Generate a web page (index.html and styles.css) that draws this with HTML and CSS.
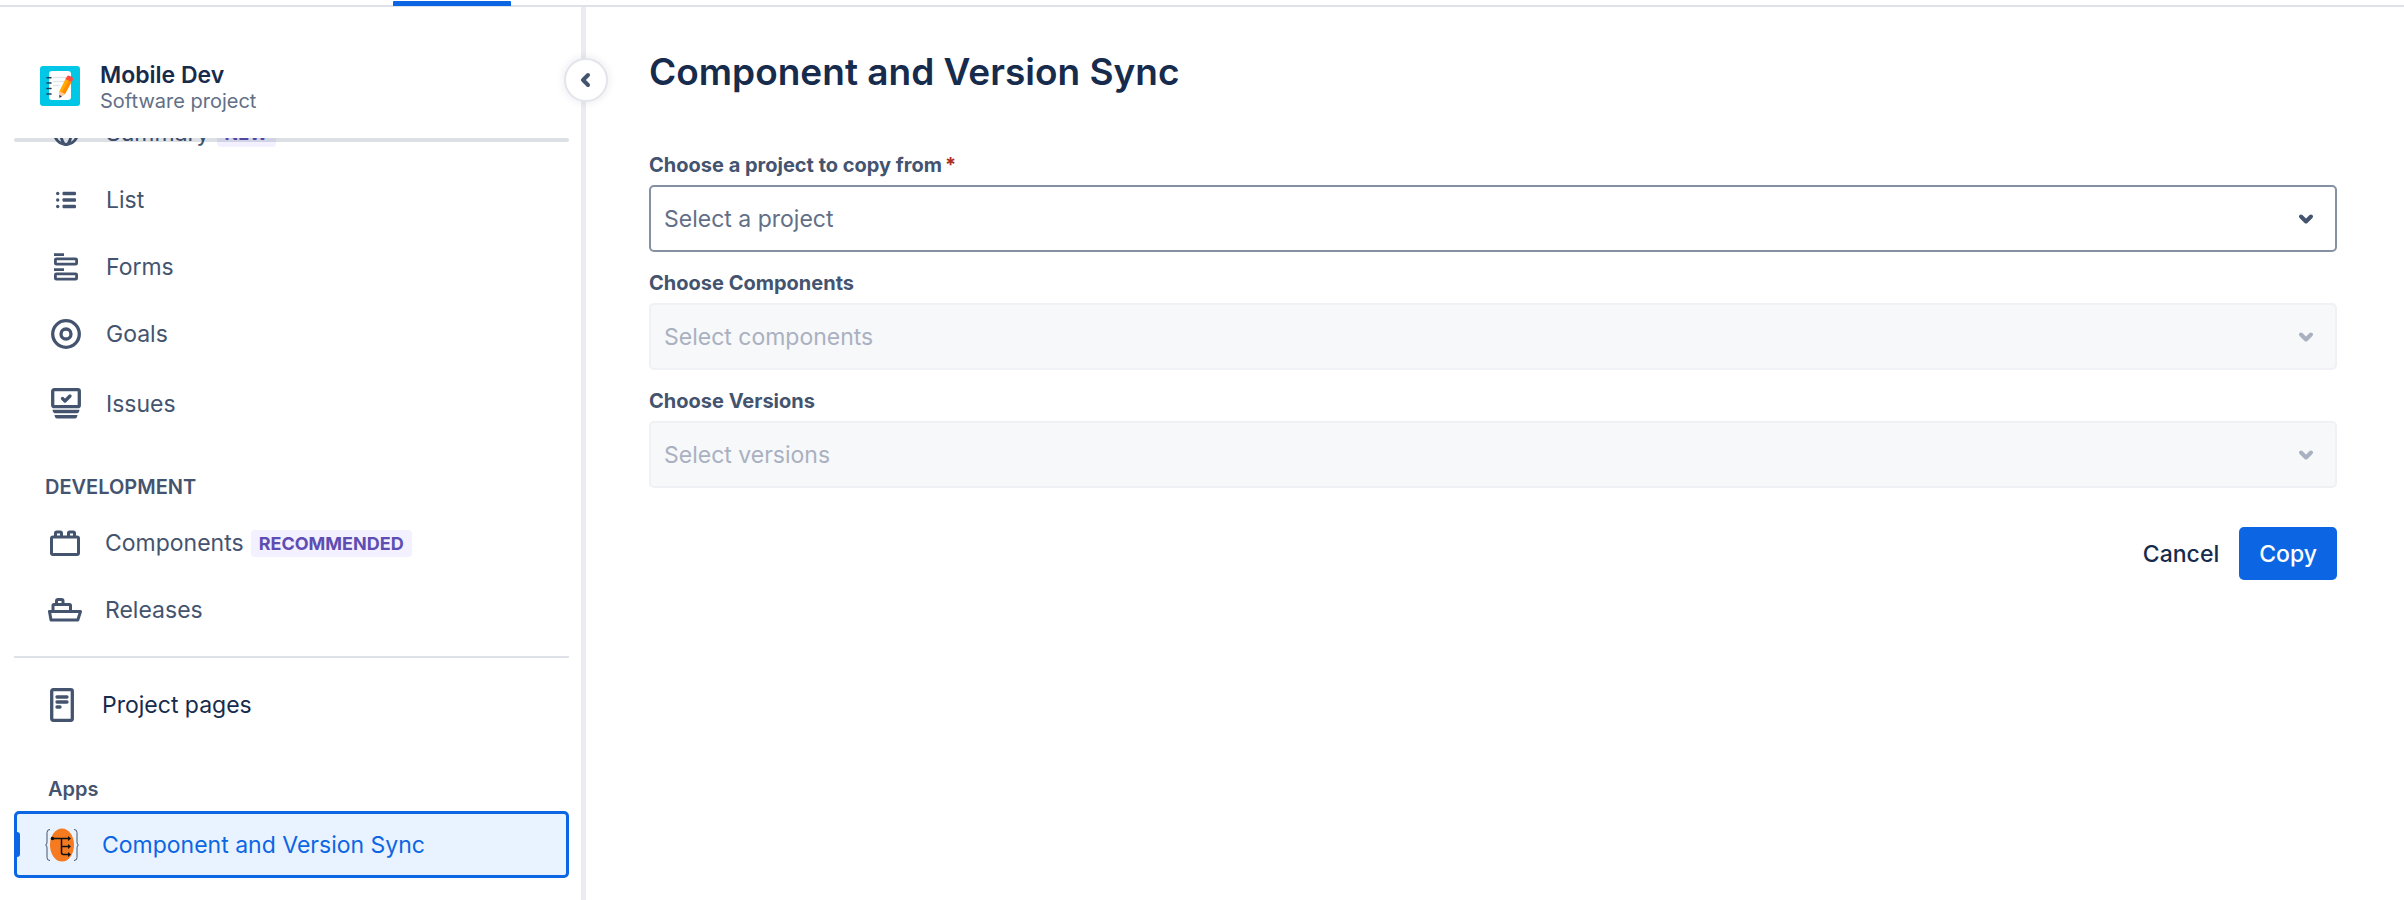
FILE: index.html
```html
<!DOCTYPE html>
<html lang="en">
<head>
    <meta charset="UTF-8">
    <meta name="viewport" content="width=device-width, initial-scale=1.0">
    <title>Component and Version Sync</title>
    <link rel="stylesheet" href="styles.css">
</head>
<body>
    <div class="topbar">
        <div class="topbar-active"></div>
    </div>

    <div class="layout">
        <aside class="sidebar">
            <button class="collapse-btn" type="button" aria-label="Collapse sidebar">
                <svg width="14" height="18" viewBox="0 0 14 18" fill="none" stroke="#44546f" stroke-width="4" stroke-linecap="round" stroke-linejoin="round"><path d="M9 4 4 9l5 5"/></svg>
            </button>

            <header class="project">
                <svg class="project-avatar" width="40" height="40" viewBox="0 0 40 40">
                    <rect width="40" height="40" rx="3" fill="#00c7e6"/>
                    <rect x="9" y="5" width="22" height="29" rx="3" fill="#fff"/>
                    <path d="M13 11.500h14M13 15.500h12M13 19.500h7" stroke="#dfe5ef" stroke-width="1.500"/>
                    <path d="M7 11.700h4M7 17h4M7 22.400h4M7 28h4" stroke="#253858" stroke-width="1.500" stroke-linecap="round"/>
                    <path d="m26 12 6 3-7 13-5 3-1-5z" fill="#ffab00"/>
                    <path d="m29 13.500 3 1.500-7 13-3-1.500z" fill="#ff8b00"/>
                    <path d="m19 25 6 3-5.500 4z" fill="#ffc9a0"/>
                    <path d="m19.200 29 2.800 1.300-2.500 1.700z" fill="#253858"/>
                    <path d="m25.500 13 1.500-2.500q1.200-1.500 3-.5l2 1q1.500 1 1 2.500L31.800 16z" fill="#ff4b3e"/>
                </svg>
                <div class="project-text">
                    <div class="project-name">Mobile Dev</div>
                    <div class="project-type">Software project</div>
                </div>
            </header>

            <nav class="nav">
                <div class="nav-list">
                    <a class="nav-item" href="#">
                        <span class="nav-icon">
                            <svg width="26" height="26" viewBox="0 0 26 26" fill="none" stroke="currentColor" stroke-width="2.800"><circle cx="13" cy="13" r="11.500"/><ellipse cx="13" cy="13" rx="5" ry="11.500"/><path d="M2 13h22"/></svg>
                        </span>
                        Summary <span class="badge">NEW</span>
                    </a>
                    <a class="nav-item" href="#">
                        <span class="nav-icon">
                            <svg width="20" height="18" viewBox="0 0 20 18" fill="currentColor"><circle cx="1.700" cy="2.500" r="1.700"/><circle cx="1.700" cy="9" r="1.700"/><circle cx="1.700" cy="15.500" r="1.700"/><rect x="6.500" y=".8" width="13.500" height="3.400" rx="1"/><rect x="6.500" y="7.300" width="13.500" height="3.400" rx="1"/><rect x="6.500" y="13.800" width="13.500" height="3.400" rx="1"/></svg>
                        </span>
                        List
                    </a>
                    <a class="nav-item" href="#">
                        <span class="nav-icon">
                            <svg width="24" height="28" viewBox="0 0 24 28" fill="none" stroke="currentColor" stroke-width="2.800"><path d="M0 1.700h10M0 16.700h10"/><rect x="1.400" y="5.800" width="21.200" height="5.400" rx="1"/><rect x="1.400" y="20.800" width="21.200" height="5.400" rx="1"/></svg>
                        </span>
                        Forms
                    </a>
                    <a class="nav-item" href="#">
                        <span class="nav-icon">
                            <svg width="30" height="30" viewBox="0 0 30 30" fill="none" stroke="currentColor" stroke-width="3.300"><circle cx="15" cy="15" r="13.300"/><circle cx="15" cy="15" r="5"/></svg>
                        </span>
                        Goals
                    </a>
                    <a class="nav-item nav-item-issues" href="#">
                        <span class="nav-icon">
                            <svg width="30" height="31" viewBox="0 0 30 31" fill="none" stroke="currentColor" stroke-width="3.300"><rect x="1.700" y="1.700" width="26.600" height="17" rx="1.500"/><path d="m11.500 10.500 2.500 2.500 5-5" stroke-linecap="round" stroke-linejoin="round"/><path d="M1.500 21.800h27q-.3 3.400-2.500 3.400H4Q1.800 25.200 1.500 21.800zM3.500 27h23q-.5 3.500-2.500 3.500H6Q4 30.500 3.500 27z" fill="currentColor" stroke="none"/></svg>
                        </span>
                        Issues
                    </a>
                </div>

                <h2 class="nav-heading nav-heading-upper">DEVELOPMENT</h2>
                <div class="nav-list nav-list-dev">
                    <a class="nav-item" href="#">
                        <span class="nav-icon">
                            <svg width="30" height="26" viewBox="0 0 30 26" fill="none" stroke="currentColor" stroke-width="3"><rect x="1.500" y="7" width="27" height="17.500" rx="1.500"/><path d="M5.500 7V3.200q0-1.200 1.200-1.200h3.600q1.200 0 1.200 1.200V7M18.500 7V3.200q0-1.200 1.200-1.200h3.600q1.200 0 1.200 1.200V7"/></svg>
                        </span>
                        Components <span class="badge">RECOMMENDED</span>
                    </a>
                    <a class="nav-item" href="#">
                        <span class="nav-icon">
                            <svg width="34" height="24" viewBox="0 0 34 24" fill="none" stroke="currentColor" stroke-width="3" stroke-linejoin="round"><path d="M1.500 13.500h31L29.800 22H3z"/><path d="M5 13V7.500Q5 6.500 6 6.500h15.500q1 0 1 1V13M8.500 6.500V3q0-1.500 1.500-1.500h3.500Q15 1.500 15 3v3.500"/></svg>
                        </span>
                        Releases
                    </a>
                </div>

                <hr class="nav-divider">

                <a class="nav-item nav-item-page" href="#">
                    <span class="nav-icon">
                        <svg width="24" height="34" viewBox="0 0 24 34" fill="none" stroke="currentColor" stroke-width="3.300"><rect x="1.700" y="1.700" width="20.600" height="30.600" rx="1.500"/><path d="M7 9h10M7 14h10M7 19h3" stroke-linecap="round"/></svg>
                    </span>
                    Project pages
                </a>

                <h2 class="nav-heading nav-heading-apps">Apps</h2>
                <a class="nav-item nav-item-app" href="#" aria-current="page">
                    <span class="nav-icon">
                        <svg width="34" height="34" viewBox="0 0 34 34" fill="none">
                            <path d="M5 1.500Q2 1.500 2 4.500v9.500q0 3-1.500 3Q2 17 2 20v9.500q0 3 3 3M29 1.500q3 0 3 3v9.500q0 3 1.500 3-1.500 0-1.500 3v9.500q0 3-3 3" stroke="#44546f"/>
                            <ellipse cx="17" cy="17" rx="12" ry="16.500" fill="#f57a20"/>
                            <path d="M7 10.500h17M16.500 10.500v14q0 2 2 2H24M16.500 18.500H24" stroke="#111" stroke-width="1.500"/>
                            <path d="m23 8 3 2.500-3 2.500zM23 16l3 2.500-3 2.500zM23 24l3 2.500-3 2.500z" fill="#111"/>
                            <circle cx="7.500" cy="10.500" r="1.800" fill="#111"/>
                        </svg>
                    </span>
                    Component and Version Sync
                </a>
            </nav>
        </aside>

        <main class="main">
            <h1 class="title">Component and Version Sync</h1>

            <form class="form">
                <div class="field">
                    <label class="field-label" for="project">Choose a project to copy from<span class="required">*</span></label>
                    <div class="select-wrap">
                        <select class="select" id="project" required>
                            <option value="">Select a project</option>
                        </select>
                        <svg class="chevron" width="18" height="12" viewBox="0 0 18 12"><path d="m4 3.500 5 5 5-5"/></svg>
                    </div>
                </div>

                <div class="field">
                    <label class="field-label" for="components">Choose Components</label>
                    <div class="select-wrap">
                        <select class="select" id="components" disabled>
                            <option value="">Select components</option>
                        </select>
                        <svg class="chevron" width="18" height="12" viewBox="0 0 18 12"><path d="m4 3.500 5 5 5-5"/></svg>
                    </div>
                </div>

                <div class="field">
                    <label class="field-label" for="versions">Choose Versions</label>
                    <div class="select-wrap">
                        <select class="select" id="versions" disabled>
                            <option value="">Select versions</option>
                        </select>
                        <svg class="chevron" width="18" height="12" viewBox="0 0 18 12"><path d="m4 3.500 5 5 5-5"/></svg>
                    </div>
                </div>

                <div class="actions">
                    <button class="btn" type="button">Cancel</button>
                    <button class="btn btn-primary" type="submit">Copy</button>
                </div>
            </form>
        </main>
    </div>
</body>
</html>
```

FILE: styles.css
```css
* {
    margin: 0;
    padding: 0;
    box-sizing: border-box;
}

body {
    font-family: Inter, sans-serif;
    font-size: 23px;
    line-height: 28px;
    color: #172b4d;
    background: #fff;
    min-height: 100vh;
    display: flex;
    flex-direction: column;
}

.topbar {
    height: 7px;
    padding-top: 1px;
    border-bottom: 2px solid #dfe1e8;
}

.topbar-active {
    position: relative;
    width: 118px;
    height: 5px;
    margin-left: 393px;
    border-radius: 1px 1px 0 0;
    background: #0c66e4;
}

.layout {
    flex: 1;
    display: flex;
}

/* Sidebar */
.sidebar {
    position: relative;
    flex: 0 0 586px;
    padding: 0 12px 0 14px;
    border-right: 5px solid #ebecf0;
}

.collapse-btn {
    position: absolute;
    top: 51px;
    right: -27px;
    width: 44px;
    height: 44px;
    display: flex;
    align-items: center;
    justify-content: center;
    border: 2px solid #e3e5eb;
    border-radius: 50%;
    background: #fff;
    box-shadow: 0 0 10px rgba(9, 30, 66, 0.1);
    cursor: pointer;
}

.project {
    position: relative;
    z-index: 1;
    display: flex;
    align-items: center;
    gap: 20px;
    height: 131px;
    padding: 27px 26px 0;
}

/* translucent, the scrolled list shows through it */
.project::after {
    content: "";
    position: absolute;
    left: 0;
    right: 0;
    top: 100%;
    height: 4px;
    border-radius: 2px;
    background: rgba(9, 30, 66, 0.14);
}

.project-text {
    padding-top: 3px;
}

.project-name {
    line-height: 26px;
    font-weight: 600;
}

.project-type {
    font-size: 20px;
    line-height: 26px;
    color: #626f86;
}

.nav {
    overflow: hidden;
}

.nav-list:first-child {
    margin-top: -39px;
}

.nav-item {
    display: flex;
    align-items: center;
    height: 67px;
    padding-left: 37px;
    color: #44546f;
    text-decoration: none;
}

.nav-list-dev .nav-item {
    padding-left: 36px;
}

.nav-item-issues {
    margin-top: 3px;
}

.nav-icon {
    display: flex;
    justify-content: center;
    width: 30px;
    margin-right: 25px;
    color: #44546f;
}

.nav-icon svg {
    flex-shrink: 0;
}

.badge {
    margin: 2px 0 0 7px;
    padding: 0 8px;
    border-radius: 4px;
    font-size: 18px;
    line-height: 27px;
    font-weight: 700;
    color: #5e4db2;
    background: #f3f0ff;
}

.nav-heading {
    font-size: 20px;
    line-height: 24px;
    font-weight: 600;
    color: #44546f;
}

.nav-heading-upper {
    padding: 38px 0 10px 31px;
}

.nav-heading-apps {
    padding: 39px 0 10px 34px;
}

.nav-divider {
    height: 2px;
    margin: 13px 0;
    border: 0;
    background: #dfe1e8;
}

.nav-item-page {
    padding-left: 33px;
    color: #172b4d;
}

.nav-item-app {
    position: relative;
    padding-left: 30px;
    border: 3px solid #0c66e4;
    border-radius: 5px;
    color: #0c66e4;
    background: #e9f2ff;
}

.nav-item-app::before {
    content: "";
    position: absolute;
    left: 0;
    top: 18px;
    width: 3px;
    height: 25px;
    border-radius: 0 3px 3px 0;
    background: #0c66e4;
}

/* Content */
.main {
    flex: 1;
    padding: 40px 67px 40px 63px;
}

.title {
    margin-bottom: 55px;
    font-size: 37px;
    line-height: 49px;
    font-weight: 600;
}

.field {
    margin-bottom: 17px;
}

.field-label {
    display: block;
    margin-bottom: 6px;
    font-size: 20px;
    font-weight: 700;
    color: #44546f;
}

.required {
    margin-left: 3px;
    color: #ae2e24;
}

.select-wrap {
    position: relative;
}

.select {
    display: block;
    width: 100%;
    height: 67px;
    padding: 0 60px 0 13px;
    appearance: none;
    border: 2px solid #8590a2;
    border-radius: 5px;
    font: inherit;
    color: #626f86;
    background: #fff;
}

.select:disabled {
    border-color: #eff1f4;
    color: #a9b1c1;
    background: #f7f8f9;
    opacity: 1;
}

.chevron {
    position: absolute;
    top: 28px;
    right: 22px;
    fill: none;
    stroke: #44546f;
    stroke-width: 4;
    stroke-linecap: round;
    stroke-linejoin: round;
    pointer-events: none;
}

.select:disabled + .chevron {
    stroke: #a9b1c1;
}

.actions {
    display: flex;
    justify-content: flex-end;
    margin-top: 39px;
}

.btn {
    height: 53px;
    padding: 0 20px;
    border: 0;
    border-radius: 5px;
    font: inherit;
    font-weight: 500;
    color: #172b4d;
    background: none;
    cursor: pointer;
}

.btn-primary {
    color: #fff;
    background: #0c66e4;
}
```
